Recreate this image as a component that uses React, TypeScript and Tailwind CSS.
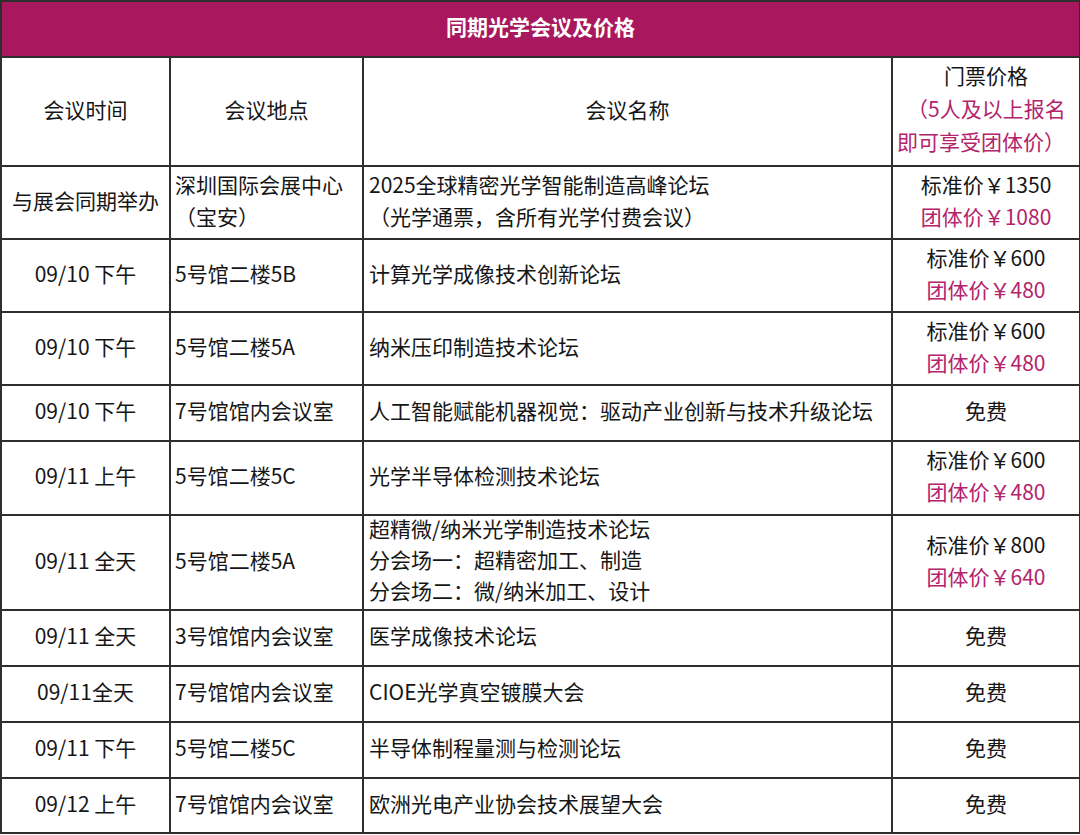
import React from "react";

const PINK = "text-[#b3246c]";

type Row = {
  h: string;
  time: React.ReactNode;
  place: React.ReactNode;
  name: React.ReactNode;
  price: React.ReactNode;
  tight?: boolean;
};

const Price = ({ s, g }: { s: string; g: string }) => (
  <>
    <div>标准价￥{s}</div>
    <div className={PINK}>团体价￥{g}</div>
  </>
);

const rows: Row[] = [
  {
    h: "h-[73px]",
    time: "与展会同期举办",
    place: (
      <>
        <div>深圳国际会展中心</div>
        <div>（宝安）</div>
      </>
    ),
    name: (
      <>
        <div>2025全球精密光学智能制造高峰论坛</div>
        <div>（光学通票，含所有光学付费会议）</div>
      </>
    ),
    price: <Price s="1350" g="1080" />,
  },
  { h: "h-[73px]", time: "09/10 下午", place: "5号馆二楼5B", name: "计算光学成像技术创新论坛", price: <Price s="600" g="480" /> },
  { h: "h-[73px]", time: "09/10 下午", place: "5号馆二楼5A", name: "纳米压印制造技术论坛", price: <Price s="600" g="480" /> },
  { h: "h-[56px]", time: "09/10 下午", place: "7号馆馆内会议室", name: "人工智能赋能机器视觉：驱动产业创新与技术升级论坛", price: "免费" },
  { h: "h-[74px]", time: "09/11 上午", place: "5号馆二楼5C", name: "光学半导体检测技术论坛", price: <Price s="600" g="480" /> },
  {
    h: "h-[95px]",
    tight: true,
    time: "09/11 全天",
    place: "5号馆二楼5A",
    name: (
      <>
        <div>超精微/纳米光学制造技术论坛</div>
        <div>分会场一：超精密加工、制造</div>
        <div>分会场二：微/纳米加工、设计</div>
      </>
    ),
    price: <Price s="800" g="640" />,
  },
  { h: "h-[56px]", time: "09/11 全天", place: "3号馆馆内会议室", name: "医学成像技术论坛", price: "免费" },
  { h: "h-[56px]", time: "09/11全天", place: "7号馆馆内会议室", name: "CIOE光学真空镀膜大会", price: "免费" },
  { h: "h-[56px]", time: "09/11 下午", place: "5号馆二楼5C", name: "半导体制程量测与检测论坛", price: "免费" },
  { h: "h-[55px]", time: "09/12 上午", place: "7号馆馆内会议室", name: "欧洲光电产业协会技术展望大会", price: "免费" },
];

const cell = "border-2 border-[#2e2e2e] align-middle p-0";

const Up = ({ children }: { children: React.ReactNode }) => <div className="-mt-[6px]">{children}</div>;

export default function App() {
  return (
    <div
      className="bg-white w-[1080px] h-[835px] text-[#161616] text-[21px] leading-[32px]"
      style={{ fontFamily: '"Noto Sans CJK SC", "Noto Sans", sans-serif' }}
    >
      <table className="border-collapse table-fixed w-[1079px]">
        <colgroup>
          <col className="w-[169px]" />
          <col className="w-[193px]" />
          <col className="w-[529px]" />
          <col className="w-[188px]" />
        </colgroup>
        <tbody>
          <tr className="h-[56px]">
            <td colSpan={4} className={`${cell} bg-[#a8185f] text-white font-bold text-center`}>
              <Up>同期光学会议及价格</Up>
            </td>
          </tr>
          <tr className="h-[109px]">
            <td className={`${cell} text-center`}><Up>会议时间</Up></td>
            <td className={`${cell} text-center`}><Up>会议地点</Up></td>
            <td className={`${cell} text-center`}><Up>会议名称</Up></td>
            <td className={`${cell} text-center leading-[33px]`}>
              <Up>
                <div>门票价格</div>
                <div className={`${PINK} pl-[14px] text-left whitespace-nowrap`}>（5人及以上报名</div>
                <div className={`${PINK} pl-[4px] text-left whitespace-nowrap`}>即可享受团体价）</div>
              </Up>
            </td>
          </tr>
          {rows.map((r, i) => (
            <tr key={i} className={r.h}>
              <td className={`${cell} text-center`}><Up>{r.time}</Up></td>
              <td className={`${cell} text-left pl-[4px]`}><Up>{r.place}</Up></td>
              <td className={`${cell} text-left pl-[5px] ${r.tight ? "leading-[31px]" : ""}`}><Up>{r.name}</Up></td>
              <td className={`${cell} text-center`}><Up>{r.price}</Up></td>
            </tr>
          ))}
        </tbody>
      </table>
    </div>
  );
}
